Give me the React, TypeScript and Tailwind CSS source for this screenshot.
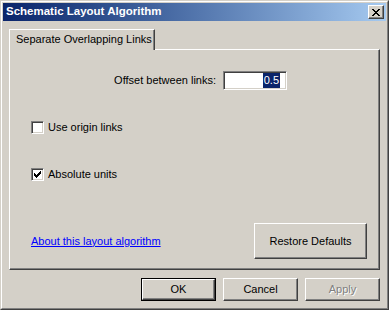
import React from 'react';

const raised =
  'border border-t-white border-l-white border-r-[#404040] border-b-[#404040] shadow-[inset_-1px_-1px_0_#808080]';
const sunken =
  'border border-t-[#808080] border-l-[#808080] border-r-white border-b-white shadow-[inset_1px_1px_0_#404040,inset_-1px_-1px_0_#d4d0c8]';

const Checkbox: React.FC<{ checked?: boolean; label: string }> = ({ checked, label }) => (
  <div className="flex items-center gap-[4px] h-[13px]">
    <div className={`w-[13px] h-[13px] bg-white flex items-center justify-center ${sunken}`}>
      {checked && (
        <svg width="7" height="7" viewBox="0 0 7 7" shapeRendering="crispEdges">
          <path d="M6 0h1v3h-1zM5 1h1v3h-1zM4 2h1v3h-1zM3 3h1v3h-1zM2 4h1v3h-1zM1 3h1v3h-1zM0 2h1v3h-1z" fill="#000" />
        </svg>
      )}
    </div>
    <span className="leading-none">{label}</span>
  </div>
);

export default function App() {
  return (
    <div className="w-[389px] h-[310px] bg-[#d4d0c8] text-[11px] text-black font-['Liberation_Sans',Arial,sans-serif] border border-t-[#d4d0c8] border-l-[#d4d0c8] border-r-[#404040] border-b-[#404040] select-none">
      <div className="h-full border border-t-white border-l-white border-r-[#808080] border-b-[#808080] p-px flex flex-col">
        {/* Title bar */}
        <div className="h-[18px] flex items-center justify-between pl-[3px] pr-[2px] bg-gradient-to-r from-[#0a246a] to-[#a6caf0]">
          <span className="text-white font-bold text-[11.5px] leading-none">Schematic Layout Algorithm</span>
          <div className={`w-[16px] h-[14px] bg-[#d4d0c8] flex items-center justify-center ${raised}`}>
            <svg width="8" height="7" viewBox="0 0 8 7" shapeRendering="crispEdges">
              <path d="M0 0h2v1h-2zM6 0h2v1h-2zM1 1h2v1h-2zM5 1h2v1h-2zM2 2h4v1h-4zM3 3h2v1h-2zM2 4h4v1h-4zM1 5h2v1h-2zM5 5h2v1h-2zM0 6h2v1h-2zM6 6h2v1h-2z" fill="#000" />
            </svg>
          </div>
        </div>

        {/* Body */}
        <div className="flex-1 flex flex-col pt-[8px] px-[6px] pb-[6px]">
          {/* Tab strip */}
          <div className="flex">
            <div className="relative z-10 -mb-px h-[21px] w-[146px] bg-[#d4d0c8] border-t border-l border-r border-t-white border-l-white border-r-[#404040] shadow-[inset_-1px_0_0_#808080] pl-[6px] pt-[4px] leading-none">
              Separate Overlapping Links
            </div>
          </div>

          {/* Tab panel */}
          <div className="h-[221px] flex flex-col border border-t-white border-l-white border-r-[#404040] border-b-[#404040] shadow-[inset_-1px_-1px_0_#808080]">
            <div className="flex items-center mt-[21px] h-[19px]">
              <span className="w-[206px] text-right">Offset between links:</span>
              <div className={`ml-[7px] w-[64px] h-[19px] bg-white flex items-center justify-end pr-[6px] ${sunken}`}>
                <span className="bg-[#0a246a] text-white leading-none px-px py-[2px]">0.5</span>
              </div>
            </div>

            <div className="mt-[31px] pl-[21px]">
              <Checkbox label="Use origin links" />
            </div>
            <div className="mt-[34px] pl-[21px]">
              <Checkbox checked label="Absolute units" />
            </div>

            <div className="mt-auto mb-[10px] flex items-center justify-between pl-[21px] pr-[12px]">
              <span className="text-[#0000ff] underline">About this layout algorithm</span>
              <div className={`w-[113px] h-[36px] flex items-center justify-center ${raised}`}>Restore Defaults</div>
            </div>
          </div>

          {/* Dialog buttons */}
          <div className="mt-[8px] flex justify-end gap-[7px]">
            <div className="w-[75px] h-[23px] border border-black">
              <div className={`h-full flex items-center justify-center ${raised}`}>OK</div>
            </div>
            <div className={`w-[75px] h-[23px] flex items-center justify-center ${raised}`}>Cancel</div>
            <div className={`w-[75px] h-[23px] flex items-center justify-center text-[#808080] [text-shadow:1px_1px_0_#fff] ${raised}`}>Apply</div>
          </div>
        </div>
      </div>
    </div>
  );
}
